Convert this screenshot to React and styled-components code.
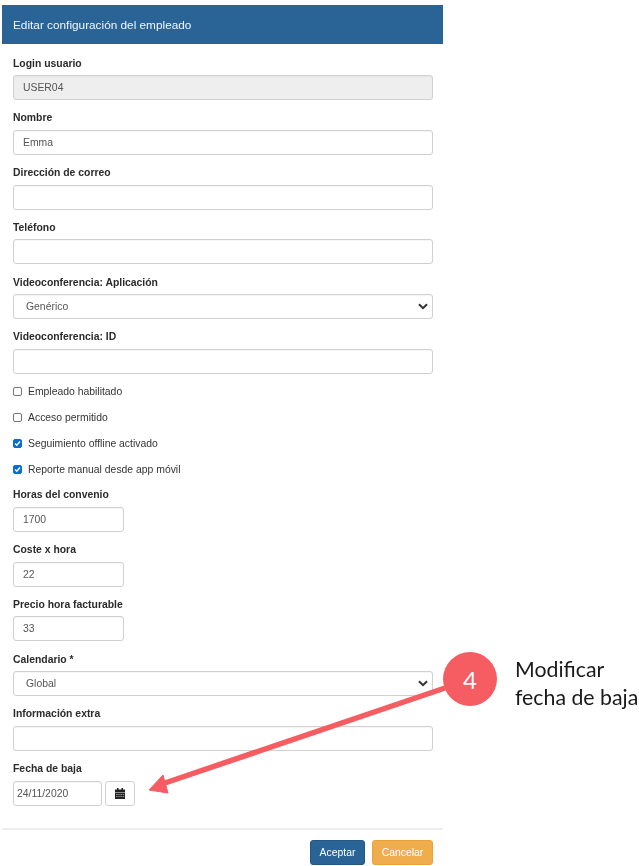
import React from "react";
import styled, { createGlobalStyle } from "styled-components";

const Global = createGlobalStyle`
  html, body { margin: 0; padding: 0; background: #fff; }
  body { font-family: "Liberation Sans", Arial, sans-serif; color: #333; }
`;

const Page = styled.div`
  position: relative;
  width: 639px;
  height: 866px;
  overflow: hidden;
  background: #fff;
  filter: blur(0.3px);
`;

const Modal = styled.div`
  width: 441px;
  margin-left: 2px;
  padding-top: 5px;
`;

const Header = styled.h1`
  margin: 0;
  height: 39px;
  box-sizing: border-box;
  padding: 0 11px;
  display: flex;
  align-items: center;
  background: #2a6496;
  color: #f2f6fa;
  font-size: 11.8px;
  font-weight: 400;
`;

const Body = styled.div`
  display: flex;
  flex-direction: column;
  padding: 12.5px 10px 0 11px;
`;

const Field = styled.div`
  display: flex;
  flex-direction: column;
  gap: 4.5px;
  margin-bottom: 11.3px;
`;

const Label = styled.label`
  font-size: 10.4px;
  font-weight: 700;
  line-height: 14px;
  height: 14px;
  color: #2b2b2b;
`;

const Input = styled.div`
  box-sizing: border-box;
  width: ${(p) => p.$width || "420px"};
  height: 25px;
  padding: 0 ${(p) => (p.$compact ? "3px" : "9px")};
  display: flex;
  align-items: center;
  border: 1px solid #d0d0d0;
  border-radius: 3px;
  box-shadow: inset 0 1px 1px rgba(0, 0, 0, 0.04);
  background: ${(p) => (p.$disabled ? "#eee" : "#fff")};
  color: #555;
  font-size: 10.4px;
`;

const Select = styled(Input)`
  justify-content: space-between;
  padding: 0 4px 0 12px;
`;

const Checks = styled.div`
  display: flex;
  flex-direction: column;
  margin: -6.5px 0 5.5px;
`;

const CheckRow = styled.div`
  display: flex;
  align-items: center;
  gap: 6px;
  height: 26px;
  font-size: 10.4px;
  color: #333;
`;

const Box = styled.span`
  box-sizing: border-box;
  width: 9px;
  height: 9px;
  border-radius: 2px;
  display: inline-flex;
  align-items: center;
  justify-content: center;
  border: 1px solid ${(p) => (p.$checked ? "#0a6ed1" : "#767676")};
  background: ${(p) => (p.$checked ? "#0a6ed1" : "#fff")};
`;

const DateRow = styled.div`
  display: flex;
  gap: 3px;
`;

const CalendarButton = styled.div`
  box-sizing: border-box;
  width: 30px;
  height: 25px;
  display: flex;
  align-items: center;
  justify-content: center;
  border: 1px solid #d0d0d0;
  border-radius: 3px;
  background: #fff;
`;

const Footer = styled.div`
  display: flex;
  justify-content: flex-end;
  gap: 7px;
  margin-top: 11px;
  padding: 10px 10px 0 0;
  border-top: 2px solid #eee;
`;

const Button = styled.div`
  box-sizing: border-box;
  height: 25px;
  width: ${(p) => p.$width};
  display: flex;
  align-items: center;
  justify-content: center;
  border-radius: 3px;
  font-size: 10.4px;
  color: #fff;
  background: ${(p) => p.$bg};
  border: 1px solid ${(p) => p.$border};
`;

const ArrowLayer = styled.svg`
  position: absolute;
  left: 0;
  top: 0;
  pointer-events: none;
`;

const Badge = styled.div`
  position: absolute;
  left: 443px;
  top: 652px;
  width: 54px;
  height: 54px;
  border-radius: 50%;
  background: #f55d62;
  color: #fff;
  display: flex;
  align-items: center;
  justify-content: center;
  font-family: Lato, sans-serif;
  font-size: 24px;
`;

const Note = styled.div`
  position: absolute;
  left: 515px;
  top: 656px;
  font-family: Lato, "Open Sans", sans-serif;
  font-size: 21.3px;
  line-height: 27.5px;
  color: #1a1a1a;
  white-space: nowrap;
`;

const Chevron = () => (
  <svg width="10" height="7" viewBox="0 0 10 7" fill="none">
    <path d="M1 1.2 L5 5.2 L9 1.2" stroke="#333" strokeWidth="2" />
  </svg>
);

const Tick = () => (
  <svg width="7" height="7" viewBox="0 0 7 7" fill="none">
    <path d="M1 3.6 L2.8 5.3 L6 1.5" stroke="#fff" strokeWidth="1.4" />
  </svg>
);

const CalendarIcon = () => (
  <svg width="10" height="11" viewBox="0 0 10 11">
    <path fill="#222" d="M0 1.5h2V0h1.5v1.5h3V0H8v1.5h2v3H0zM0 5h10v6H0z" />
    <path
      fill="#bbb"
      d="M1 6h1.5v.8H1zM3.2 6h1.5v.8H3.2zM5.4 6h1.5v.8H5.4zM7.6 6h1.5v.8H7.6zM1 8.2h1.5v.8H1zM3.2 8.2h1.5v.8H3.2zM5.4 8.2h1.5v.8H5.4zM7.6 8.2h1.5v.8H7.6z"
    />
  </svg>
);

const Text = ({ label, value, disabled, width }) => (
  <Field>
    <Label>{label}</Label>
    <Input $disabled={disabled} $width={width}>
      {value}
    </Input>
  </Field>
);

const Drop = ({ label, value }) => (
  <Field>
    <Label>{label}</Label>
    <Select>
      {value}
      <Chevron />
    </Select>
  </Field>
);

const Check = ({ label, checked }) => (
  <CheckRow>
    <Box $checked={checked}>{checked && <Tick />}</Box>
    {label}
  </CheckRow>
);

export default function App() {
  return (
    <Page>
      <Global />
      <Modal>
        <Header>Editar configuración del empleado</Header>
        <Body>
          <Text label="Login usuario" value="USER04" disabled />
          <Text label="Nombre" value="Emma" />
          <Text label="Dirección de correo" />
          <Text label="Teléfono" />
          <Drop label="Videoconferencia: Aplicación" value="Genérico" />
          <Text label="Videoconferencia: ID" />
          <Checks>
            <Check label="Empleado habilitado" />
            <Check label="Acceso permitido" />
            <Check label="Seguimiento offline activado" checked />
            <Check label="Reporte manual desde app móvil" checked />
          </Checks>
          <Text label="Horas del convenio" value="1700" width="111px" />
          <Text label="Coste x hora" value="22" width="111px" />
          <Text label="Precio hora facturable" value="33" width="111px" />
          <Drop label="Calendario *" value="Global" />
          <Text label="Información extra" />
          <Field>
            <Label>Fecha de baja</Label>
            <DateRow>
              <Input $width="89px" $compact>
                24/11/2020
              </Input>
              <CalendarButton>
                <CalendarIcon />
              </CalendarButton>
            </DateRow>
          </Field>
        </Body>
        <Footer>
          <Button $width="55px" $bg="#2a6496" $border="#245682">
            Aceptar
          </Button>
          <Button $width="61px" $bg="#f0ad4e" $border="#eea236">
            Cancelar
          </Button>
        </Footer>
      </Modal>
      <ArrowLayer width="639" height="866" viewBox="0 0 639 866">
        <path d="M445 688 L162 784" stroke="#f55d62" strokeWidth="5.5" fill="none" />
        <path d="M149 790 L163 775 L168 793 Z" fill="#f55d62" stroke="#f55d62" strokeWidth="1" />
      </ArrowLayer>
      <Badge>4</Badge>
      <Note>
        Modificar
        <br />
        fecha de baja
      </Note>
    </Page>
  );
}
